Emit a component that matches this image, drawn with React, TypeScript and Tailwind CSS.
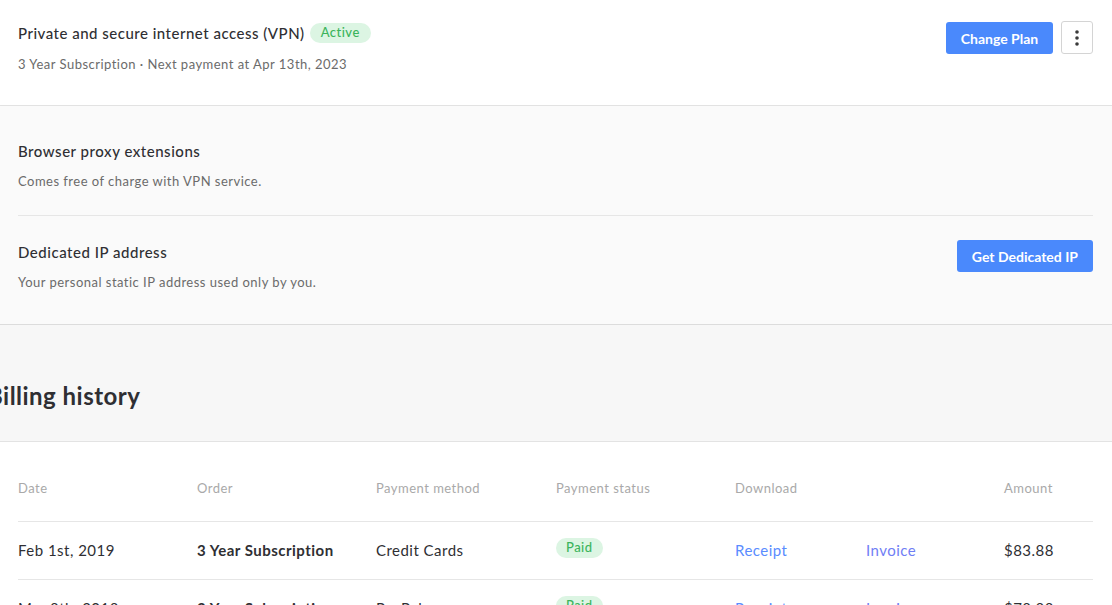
import { FC } from "react"

interface Payment {
  date: string
  order: string
  method: string
  status: string
  amount: string
}

const payments: Payment[] = [
  { date: "Feb 1st, 2019", order: "3 Year Subscription", method: "Credit Cards", status: "Paid", amount: "$83.88" },
  { date: "Mar 8th, 2018", order: "3 Year Subscription", method: "PayPal", status: "Paid", amount: "$78.88" },
]

const KebabIcon: FC = () => (
  <svg width="4" height="16" viewBox="0 0 4 16" fill="#3a3a3a">
    <circle cx="2" cy="2" r="1.8" />
    <circle cx="2" cy="8" r="1.8" />
    <circle cx="2" cy="14" r="1.8" />
  </svg>
)

const AddonRow: FC<{ title: string; text: string; action?: string; last?: boolean }> = ({ title, text, action, last }) => (
  <div className={`flex items-center justify-between h-[101px] ${last ? "" : "border-b border-[#e6e6e6]"}`}>
    <div className="flex flex-col gap-[13px]">
      <h3 className="text-[15px] leading-[18px] font-medium text-[#2f2f33] tracking-[0.035em]">{title}</h3>
      <p className="text-[13px] leading-[16px] text-[#6b6b6b]">{text}</p>
    </div>
    {action && (
      <button className="self-start mt-[24px] h-[32px] px-[15px] rounded-[3px] bg-[#4a89fc] text-white text-[14px] font-bold tracking-normal">
        {action}
      </button>
    )}
  </div>
)

const App: FC = () => {
  return (
    <div
      className="w-[1112px] h-[605px] overflow-hidden bg-white tracking-[0.03em]"
      style={{ fontFamily: "Lato, 'Open Sans', sans-serif" }}
    >
      <section className="h-[106px] border-b border-[#e3e3e3] flex items-start justify-between pl-[18px] pr-[19px] pt-[21px]">
        <div className="flex flex-col gap-[11px]">
          <div className="flex items-center gap-[5px] h-[24px]">
            <h2 className="text-[15px] font-medium text-[#2f2f33] tracking-[0.033em]">Private and secure internet access (VPN)</h2>
            <span className="h-[20px] px-[11px] rounded-full bg-[#dcf5e3] text-[#3bb45c] text-[13px] font-medium flex items-center">
              Active
            </span>
          </div>
          <p className="text-[13px] leading-[16px] text-[#6b6b6b]">3 Year Subscription · Next payment at Apr 13th, 2023</p>
        </div>
        <div className="flex items-start gap-[8px]">
          <button className="mt-[1px] h-[32px] w-[107px] rounded-[3px] bg-[#4a89fc] text-white text-[14px] font-bold tracking-normal">
            Change Plan
          </button>
          <button className="h-[33px] w-[32px] rounded-[3px] border border-[#d4d4d4] bg-white flex items-center justify-center">
            <KebabIcon />
          </button>
        </div>
      </section>

      <section className="bg-[#fafafa] border-b border-[#dcdcdc] shadow-[0_1px_2px_rgba(0,0,0,0.06)] pl-[18px] pr-[19px] pt-[9px] h-[219px]">
        <AddonRow title="Browser proxy extensions" text="Comes free of charge with VPN service." />
        <AddonRow title="Dedicated IP address" text="Your personal static IP address used only by you." action="Get Dedicated IP" last />
      </section>

      <section className="bg-[#f7f7f7] border-b border-[#e3e3e3] h-[117px] flex items-center pt-[26px]">
        <h1 className="-ml-[13px] text-[24px] font-bold text-[#2f2f33]">Billing history</h1>
      </section>

      <section className="pl-[18px] pr-[19px]">
        <div className="grid grid-cols-[179px_179px_180px_179px_131px_138px_1fr] items-center h-[80px] border-b border-[#e6e6e6] pt-[14px] text-[13px] text-[#a9a9a9]">
          <span>Date</span>
          <span>Order</span>
          <span>Payment method</span>
          <span>Payment status</span>
          <span>Download</span>
          <span></span>
          <span>Amount</span>
        </div>
        {payments.map((p, i) => (
          <div
            key={i}
            className="grid grid-cols-[179px_179px_180px_179px_131px_138px_1fr] items-center h-[58px] border-b border-[#e6e6e6] text-[15px] text-[#2f2f33]"
          >
            <span>{p.date}</span>
            <span className="font-bold">{p.order}</span>
            <span>{p.method}</span>
            <span className="flex">
              <span className="flex items-center h-[20px] px-[10px] -translate-y-[3px] rounded-full bg-[#dcf5e3] text-[#3bb45c] text-[13px] font-medium">
                {p.status}
              </span>
            </span>
            <span className="text-[#5a8cff]">Receipt</span>
            <span className="text-[#6f7ef5]">Invoice</span>
            <span>{p.amount}</span>
          </div>
        ))}
      </section>
    </div>
  )
}

export default App
